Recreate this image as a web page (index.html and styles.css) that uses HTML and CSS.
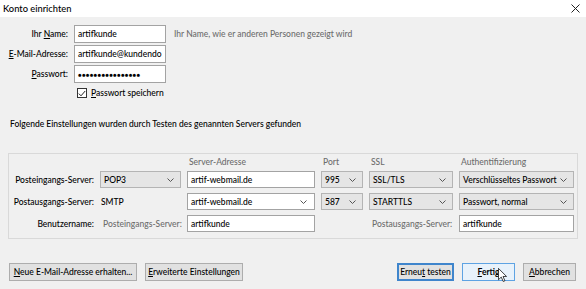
FILE: index.html
```html
<!DOCTYPE html>
<html lang="de">
<head>
<meta charset="utf-8">
<title>Konto einrichten</title>
<link rel="stylesheet" href="styles.css">
</head>
<body>
<div class="window">
  <div class="titlebar">
    <span class="title">Konto einrichten</span>
    <svg class="close" width="9" height="9" viewBox="0 0 9 9"><path d="M0.5 0.5L8.5 8.5M8.5 0.5L0.5 8.5" stroke="#222" stroke-width="1"/></svg>
  </div>
  <div class="content">
    <div class="identity">
      <span class="lbl">Ihr <u>N</u>ame:</span>
      <div class="field"><span>artifkunde</span></div>
      <span class="hint">Ihr Name, wie er anderen Personen gezeigt wird</span>
      <span class="lbl"><u>E</u>-Mail-Adresse:</span>
      <div class="field"><span>artifkunde@kundendo</span></div>
      <span></span>
      <span class="lbl"><u>P</u>asswort:</span>
      <div class="field pw"><span>●●●●●●●●●●●●●●●●</span></div>
      <span></span>
      <span></span>
      <div class="check">
        <span class="box"><svg width="8" height="7" viewBox="0 0 8 7"><path d="M0.8 3.6L3 5.8L7.2 1" fill="none" stroke="#222" stroke-width="1"/></svg></span>
        <span><u>P</u>asswort speichern</span>
      </div>
    </div>

    <p class="info">Folgende Einstellungen wurden durch Testen des genannten Servers gefunden</p>

    <div class="group">
      <span></span>
      <span></span>
      <span class="head">Server-Adresse</span>
      <span class="head">Port</span>
      <span class="head">SSL</span>
      <span class="head">Authentifizierung</span>

      <span class="rlbl">Posteingangs-Server:</span>
      <div class="select"><span>POP3</span><svg class="chev" width="7" height="4" viewBox="0 0 7 4"><path d="M0.5 0.5L3.5 3.5L6.5 0.5" fill="none" stroke="#555" stroke-width="1"/></svg></div>
      <div class="field"><span>artif-webmail.de</span></div>
      <div class="select"><span>995</span><svg class="chev" width="7" height="4" viewBox="0 0 7 4"><path d="M0.5 0.5L3.5 3.5L6.5 0.5" fill="none" stroke="#555" stroke-width="1"/></svg></div>
      <div class="select"><span>SSL/TLS</span><svg class="chev" width="7" height="4" viewBox="0 0 7 4"><path d="M0.5 0.5L3.5 3.5L6.5 0.5" fill="none" stroke="#555" stroke-width="1"/></svg></div>
      <div class="select"><span>Verschlüsseltes Passwort</span><svg class="chev" width="7" height="4" viewBox="0 0 7 4"><path d="M0.5 0.5L3.5 3.5L6.5 0.5" fill="none" stroke="#555" stroke-width="1"/></svg></div>

      <span class="rlbl">Postausgangs-Server:</span>
      <span class="plain">SMTP</span>
      <div class="field combo"><span>artif-webmail.de</span><svg class="chev" width="7" height="4" viewBox="0 0 7 4"><path d="M0.5 0.5L3.5 3.5L6.5 0.5" fill="none" stroke="#555" stroke-width="1"/></svg></div>
      <div class="select"><span>587</span><svg class="chev" width="7" height="4" viewBox="0 0 7 4"><path d="M0.5 0.5L3.5 3.5L6.5 0.5" fill="none" stroke="#555" stroke-width="1"/></svg></div>
      <div class="select"><span>STARTTLS</span><svg class="chev" width="7" height="4" viewBox="0 0 7 4"><path d="M0.5 0.5L3.5 3.5L6.5 0.5" fill="none" stroke="#555" stroke-width="1"/></svg></div>
      <div class="select"><span>Passwort, normal</span><svg class="chev" width="7" height="4" viewBox="0 0 7 4"><path d="M0.5 0.5L3.5 3.5L6.5 0.5" fill="none" stroke="#555" stroke-width="1"/></svg></div>

      <span class="rlbl">Benutzername:</span>
      <span class="plain gray">Posteingangs-Server:</span>
      <div class="field"><span>artifkunde</span></div>
      <span></span>
      <span class="plain gray">Postausgangs-Server:</span>
      <div class="field"><span>artifkunde</span></div>
    </div>

    <div class="actions">
      <div class="btns">
        <div class="btn w-neue"><span><u>N</u>eue E-Mail-Adresse erhalten...</span></div>
        <div class="btn w-erw"><span><u>E</u>rweiterte Einstellungen</span></div>
      </div>
      <div class="btns">
        <div class="btn default w-retest"><span>Erneu<u>t</u> testen</span></div>
        <div class="btn hover w-fertig"><span><u>F</u>ertig</span></div>
        <div class="btn w-abb"><span><u>A</u>bbrechen</span></div>
      </div>
    </div>
  </div>
  <svg class="cursor" width="9" height="14" viewBox="0 0 12 19"><path d="M0.5 0.5L0.5 16L4.3 12.3L7 18.3L9.3 17.3L6.7 11.5L11.5 11.5Z" fill="#fff" stroke="#000" stroke-width="1"/></svg>
</div>
</body>
</html>
```

FILE: styles.css
```css
* { box-sizing: border-box; }
body {
  margin: 0;
  font-family: Lato, "Liberation Sans", sans-serif;
  font-size: 8.5px;
  font-weight: 500;
  color: #000;
}
.window {
  width: 586px;
  height: 289px;
  background: #f0f0f0;
  position: relative;
  overflow: hidden;
}
.titlebar {
  height: 17px;
  background: #fff;
  display: flex;
  align-items: center;
  justify-content: space-between;
  padding: 0 6px 0 3px;
}
.title { font-size: 9.3px; }
.content { padding-top: 8px; }

.identity {
  display: grid;
  grid-template-columns: 68px 92px auto;
  grid-template-rows: 18px 18px 18px auto;
  column-gap: 6px;
  row-gap: 2px;
  align-items: center;
}
.lbl { text-align: right; }
.hint { color: #6d6d6d; margin-left: 2px; }
.field {
  height: 18px;
  background: #fff;
  border: 1px solid #a3a3a3;
  padding: 0 3px;
  display: flex;
  align-items: center;
  white-space: nowrap;
  overflow: hidden;
}
.pw { font-size: 6px; letter-spacing: 0.3px; }
.check {
  grid-column: 2 / 4;
  margin-top: 2px;
  height: 12px;
  padding-left: 3px;
  display: flex;
  align-items: center;
  gap: 4px;
}
.box {
  width: 10px;
  height: 10px;
  border: 1px solid #333;
  background: #fff;
  display: flex;
  align-items: center;
  justify-content: center;
}
.info {
  margin: 19px 0 0 10px;
  line-height: 12px;
}
.group {
  margin: 23px 8px 0 8px;
  border: 1px solid #d9d9d9;
  padding: 0 0 6px 0;
  display: grid;
  grid-template-columns: 85px 81px 128px 42px 84px 115px;
  grid-template-rows: 17px 17px 22px 22px;
  column-gap: 6px;
  align-items: end;
}
.group > * { height: 17px; }
.group .head { color: #6d6d6d; padding-left: 2px; line-height: 12px; padding-top: 2px; }
.rlbl, .plain { display: flex; align-items: center; white-space: nowrap; }
.rlbl { justify-content: flex-end; }
.plain { padding-left: 1px; }
.gray { color: #6d6d6d; padding-left: 3px; }
.group .field { height: 17px; }
.select {
  height: 17px;
  background: #e5e5e5;
  border: 1px solid #b4b4b4;
  padding: 0 6px 0 3px;
  display: flex;
  align-items: center;
  justify-content: space-between;
  white-space: nowrap;
}
.combo { justify-content: space-between; padding-right: 7px; }

.actions {
  margin-top: 24px;
  padding: 0 10px 0 9px;
  display: flex;
  justify-content: space-between;
}
.btns { display: flex; gap: 8px; }
.btn {
  height: 18px;
  background: #e1e1e1;
  border: 1px solid #adadad;
  display: flex;
  align-items: center;
  justify-content: center;
  white-space: nowrap;
}
.btn.default { border: 2px solid #3f85cc; }
.btn.hover { background: #e8f2fb; border-color: #5ea3e3; font-weight: 700; }
.w-neue { width: 128px; }
.w-erw { width: 98px; }
.w-retest { width: 57px; }
.w-fertig { width: 53px; }
.w-abb { width: 53px; }

.cursor {
  position: absolute;
  left: 498px;
  top: 268px;
}
```
